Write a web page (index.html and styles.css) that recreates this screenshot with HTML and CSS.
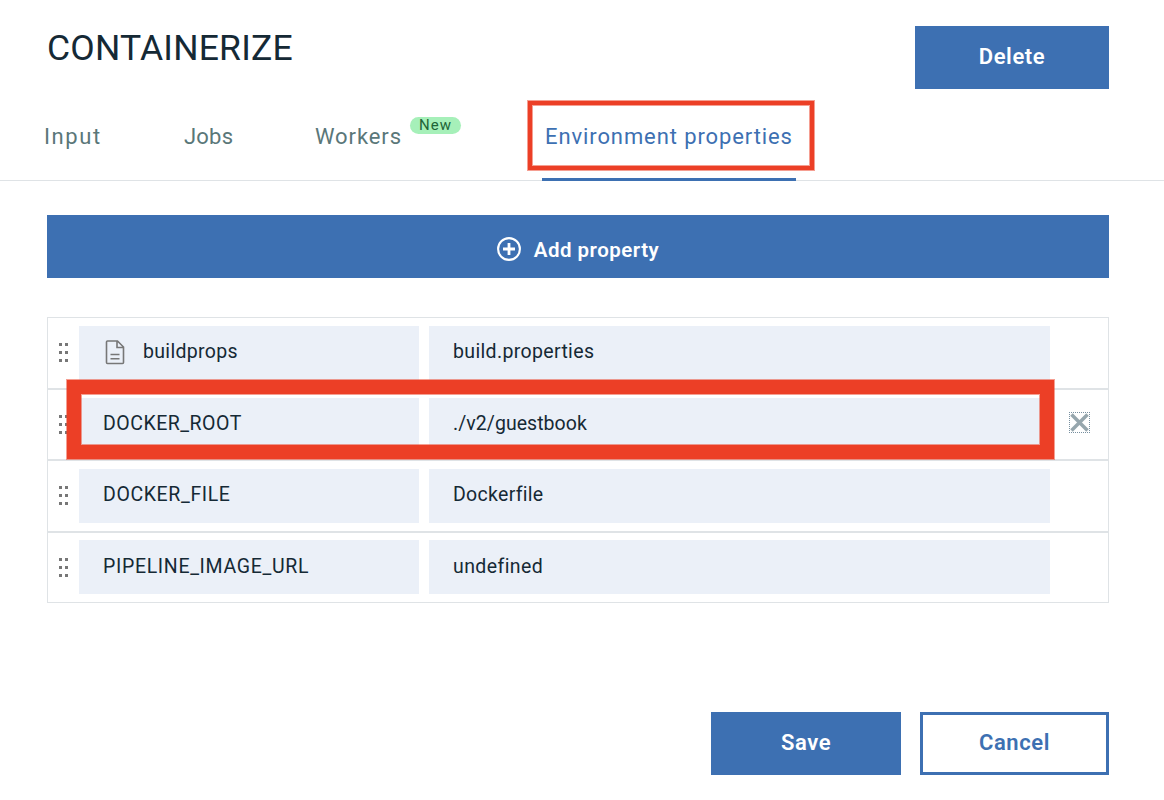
FILE: index.html
```html
<!DOCTYPE html>
<html lang="en">
<head>
<meta charset="utf-8">
<title>Containerize</title>
<link rel="stylesheet" href="styles.css">
</head>
<body>
<main class="page">
  <header class="header">
    <h1 class="title">CONTAINERIZE</h1>
    <button class="btn btn-delete">Delete</button>
  </header>
  <nav class="tabs">
    <a class="tab tab-input"><span>Input</span></a>
    <a class="tab tab-jobs"><span>Jobs</span></a>
    <a class="tab tab-workers"><span>Workers</span><span class="badge">New</span></a>
    <a class="tab tab-env"><span>Environment properties</span><i class="mark mark-tab"></i></a>
  </nav>
  <section class="content">
    <button class="btn btn-add">
      <svg class="plus" viewBox="0 0 24 24"><circle cx="12" cy="12" r="10.9" fill="none" stroke="#fff" stroke-width="2.1"/><path d="M12 6v12M6 12h12" stroke="#fff" stroke-width="2.8"/></svg>
      <span>Add property</span>
    </button>
    <div class="list">
      <div class="row">
        <svg class="grip" viewBox="0 0 9 20"><path d="M0 0h3v3H0zM6 0h3v3H6zM0 8h3v3H0zM6 8h3v3H6zM0 16h3v3H0zM6 16h3v3H6z"/></svg>
        <div class="field key"><svg class="doc" viewBox="0 0 20 25"><path d="M2.500 1h10L18.500 7V22.500Q18.500 23.500 17.500 23.500H2.500Q1.500 23.500 1.500 22.500V2Q1.500 1 2.500 1zM12 1v6.500h6.500M5.500 14.500h9M5.500 18.700h9"/></svg><span class="buildprops">buildprops</span></div>
        <div class="field value"><span class="build-value">build.properties</span></div>
      </div>
      <div class="row row-short">
        <svg class="grip" viewBox="0 0 9 20"><path d="M0 0h3v3H0zM6 0h3v3H6zM0 8h3v3H0zM6 8h3v3H6zM0 16h3v3H0zM6 16h3v3H6z"/></svg>
        <div class="field key"><span class="root-key">DOCKER_ROOT</span></div>
        <div class="field value"><span class="root-value">./v2/guestbook</span></div>
        <button class="remove" aria-label="Remove"><svg viewBox="0 0 21 21"><path d="M0 .5h21M0 20.500h21M.5 0v21M20.500 0v21" fill="none" stroke="#7890a0" stroke-dasharray="1 1" shape-rendering="crispEdges"/><path d="M2.500 2.500l16 16M18.500 2.500l-16 16" stroke="#96a6ad" stroke-width="3.500"/></svg></button>
        <i class="mark mark-row"></i>
      </div>
      <div class="row">
        <svg class="grip" viewBox="0 0 9 20"><path d="M0 0h3v3H0zM6 0h3v3H6zM0 8h3v3H0zM6 8h3v3H6zM0 16h3v3H0zM6 16h3v3H6z"/></svg>
        <div class="field key"><span class="file-key">DOCKER_FILE</span></div>
        <div class="field value"><span class="file-value">Dockerfile</span></div>
      </div>
      <div class="row row-short row-last">
        <svg class="grip" viewBox="0 0 9 20"><path d="M0 0h3v3H0zM6 0h3v3H6zM0 8h3v3H0zM6 8h3v3H6zM0 16h3v3H0zM6 16h3v3H6z"/></svg>
        <div class="field key"><span class="url-key">PIPELINE_IMAGE_URL</span></div>
        <div class="field value"><span class="url-value">undefined</span></div>
      </div>
    </div>
  </section>
  <footer class="footer">
    <button class="btn btn-save">Save</button>
    <button class="btn btn-cancel">Cancel</button>
  </footer>
</main>
</body>
</html>
```
FILE: styles.css
```css
* { box-sizing: border-box; }
body { margin: 0; background: #fff; color: #152935; font-family: Roboto, "Noto Sans", sans-serif; }
.page { height: 800px; display: flex; flex-direction: column; overflow: hidden; }
.header { height: 89px; flex: none; padding: 26px 55px 0 47px; display: flex; justify-content: space-between; }
.title { margin: 0; font-size: 35.5px; line-height: 44px; font-weight: 400; letter-spacing: .2px; }
.btn { border: 0; margin: 0; padding: 0 0 2px; background: #3d70b2; color: #fff; height: 63px; font: 600 22px/30px Roboto, sans-serif; letter-spacing: .6px; }
.btn-delete { width: 194px; }

.tabs { height: 92px; flex: none; display: flex; border-bottom: 1px solid #dfe3e6; padding-left: 43px; font-size: 22px; line-height: 30px; }
.tab { position: relative; padding-top: 33px; white-space: nowrap; color: #5a7779; }
.tab-input { width: 140px; letter-spacing: 1.6px; padding-left: 1px; }
.tab-jobs { width: 132px; letter-spacing: .2px; padding-left: 1px; }
.tab-workers { width: 227px; letter-spacing: .9px; }
.tab-env { width: 254px; height: 92px; padding-left: 3px; color: #3d70b2; border-bottom: 3px solid #3d70b2; letter-spacing: .9px; }
.badge { position: absolute; left: 95px; top: 28px; width: 51px; height: 17px; border-radius: 9px; background: #a6f0b9; color: #216437; font-size: 15px; line-height: 17px; letter-spacing: 1px; text-align: center; }
.mark { position: absolute; border: solid #ec3f26; box-shadow: 0 0 0 1px rgba(236, 63, 38, .5), inset 0 0 0 1px rgba(236, 63, 38, .5); z-index: 2; }
.mark-tab { left: -14px; top: 12px; width: 286px; height: 69px; border-width: 4px; }

.content { padding: 34px 55px 0 47px; flex: none; }
.btn-add { width: 100%; display: flex; align-items: center; justify-content: center; gap: 13px; padding: 6px 0 0; font-size: 20.500px; letter-spacing: .5px; }
.plus { width: 24px; height: 24px; margin-top: -2px; overflow: visible; }
.list { margin-top: 39px; border-left: 1px solid #dfe3e6; border-right: 1px solid #dfe3e6; }
.row { position: relative; height: 72px; padding: 8px 0 0 11px; display: flex; border-top: 1px solid #dfe3e6; border-bottom: 1px solid #dfe3e6; }
.row-short { height: 71px; }
.row-last { padding-top: 7px; }
.grip { width: 9px; height: 20px; flex: none; margin: 17px 11px 0 0; fill: #777; }
.row-last .grip { margin-top: 18px; }
.field { height: 54px; background: #ebf0f8; padding: 0 24px 2px; display: flex; align-items: center; font-size: 19.500px; line-height: 26px; white-space: nowrap; }
.row-last .field { padding-bottom: 0; }
.key { width: 340px; margin-right: 10px; }
.value { width: 621px; }
.doc { width: 20px; height: 25px; margin: 1px 18px 0 2px; fill: none; stroke: #777; stroke-width: 1.600; }
.buildprops { letter-spacing: .33px; }
.build-value { letter-spacing: .35px; }
.root-key { letter-spacing: .5px; }
.root-value { letter-spacing: .05px; }
.file-key { letter-spacing: .62px; }
.file-value { letter-spacing: .3px; }
.url-key { letter-spacing: .67px; }
.url-value { letter-spacing: .4px; }
.remove { width: 21px; height: 21px; margin: 14px 0 0 19px; padding: 0; border: 0; background: none; }
.remove svg { display: block; width: 21px; height: 21px; }
.mark-row { left: 19px; top: -10px; width: 987px; height: 79px; border-width: 14px; }

.footer { margin-top: 109px; padding-right: 55px; display: flex; justify-content: flex-end; gap: 19px; }
.btn-save { width: 190px; }
.btn-cancel { width: 189px; background: #fff; color: #3d70b2; border: 3px solid #3d70b2; }
```
